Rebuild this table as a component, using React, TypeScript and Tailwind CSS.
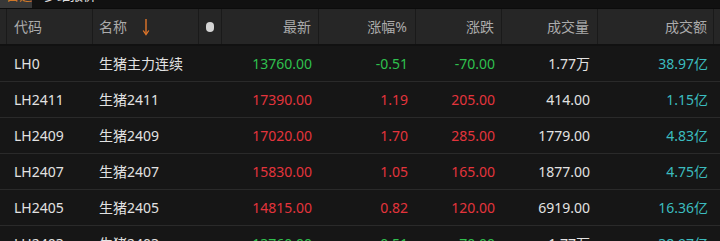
import React from "react";

type Row = {
  code: string;
  name: string;
  last: string;
  pct: string;
  chg: string;
  vol: string;
  amt: string;
  up: boolean;
};

const rows: Row[] = [
  { code: "LH0", name: "生猪主力连续", last: "13760.00", pct: "-0.51", chg: "-70.00", vol: "1.77万", amt: "38.97亿", up: false },
  { code: "LH2411", name: "生猪2411", last: "17390.00", pct: "1.19", chg: "205.00", vol: "414.00", amt: "1.15亿", up: true },
  { code: "LH2409", name: "生猪2409", last: "17020.00", pct: "1.70", chg: "285.00", vol: "1779.00", amt: "4.83亿", up: true },
  { code: "LH2407", name: "生猪2407", last: "15830.00", pct: "1.05", chg: "165.00", vol: "1877.00", amt: "4.75亿", up: true },
  { code: "LH2405", name: "生猪2405", last: "14815.00", pct: "0.82", chg: "120.00", vol: "6919.00", amt: "16.36亿", up: true },
  { code: "LH2403", name: "生猪2403", last: "13760.00", pct: "-0.51", chg: "-70.00", vol: "1.77万", amt: "38.97亿", up: false },
];

const grid = "grid grid-cols-[7px_86px_106px_23px_97px_97px_86px_96px_116px_6px]";

export default function App() {
  return (
    <div
      className="w-[720px] h-[241px] overflow-hidden bg-[#161616] text-[14px]"
      style={{ fontFamily: '"Noto Sans", "Noto Sans CJK SC", sans-serif' }}
    >
      {/* top tab strip */}
      <div className="h-[8px] overflow-hidden flex items-end bg-[#111111]">
        <div className="w-[32px] h-[8px] bg-[#383838] flex items-end overflow-hidden pl-[6px]">
          <span className="leading-[26px] text-[#d07828] text-[13px] shrink-0">自选</span>
        </div>
        <div className="h-[8px] flex items-end overflow-hidden pl-[12px]">
          <span className="leading-[26px] text-[#e0e0e0] text-[13px] shrink-0">多维报价</span>
        </div>
      </div>
      <div className="h-[1px] bg-[#0c0c0c]" />
      {/* header */}
      <div className={`${grid} h-[35px] bg-[#262626] text-[#ababab]`}>
        <div className="border-r border-[#1a1a1a]" />
        <div className="border-r border-[#1a1a1a] flex items-center pl-[7px]">代码</div>
        <div className="border-r border-[#1a1a1a] flex items-center pl-[6px]">
          名称
          <svg className="ml-[15px]" width="8" height="18" viewBox="0 0 8 18">
            <path d="M4 1 V16" stroke="#e0762a" strokeWidth="1.4" fill="none" />
            <path d="M1.2 12.5 L4 16.5 L6.8 12.5" stroke="#e0762a" strokeWidth="1.3" fill="none" />
          </svg>
        </div>
        <div className="border-r border-[#1a1a1a] flex items-center justify-center">
          <span className="block w-[8px] h-[10px] rounded-full bg-[#d4d4d4]" />
        </div>
        <div className="border-r border-[#1a1a1a] flex items-center justify-end pr-[7px]">最新</div>
        <div className="border-r border-[#1a1a1a] flex items-center justify-end pr-[8px]">涨幅%</div>
        <div className="border-r border-[#1a1a1a] flex items-center justify-end pr-[7px]">涨跌</div>
        <div className="border-r border-[#1a1a1a] flex items-center justify-end pr-[8px]">成交量</div>
        <div className="border-r border-[#1a1a1a] flex items-center justify-end pr-[6px]">成交额</div>
        <div />
      </div>
      <div className="h-[2px] bg-[#111111]" />
      {rows.map((r, i) => {
        const c = r.up ? "text-[#e3343c]" : "text-[#2fc04e]";
        return (
          <div key={i} className={`${grid} h-[36px] border-b border-[#2a2a2a] text-[#e2e2e2]`}>
            <div />
            <div className="flex items-center pl-[7px]">{r.code}</div>
            <div className="flex items-center pl-[6px]">{r.name}</div>
            <div />
            <div className={`flex items-center justify-end pr-[7px] ${c}`}>{r.last}</div>
            <div className={`flex items-center justify-end pr-[8px] ${c}`}>{r.pct}</div>
            <div className={`flex items-center justify-end pr-[7px] ${c}`}>{r.chg}</div>
            <div className="flex items-center justify-end pr-[8px]">{r.vol}</div>
            <div className="flex items-center justify-end pr-[6px] text-[#3bbcbf]">{r.amt}</div>
            <div />
          </div>
        );
      })}
    </div>
  );
}
